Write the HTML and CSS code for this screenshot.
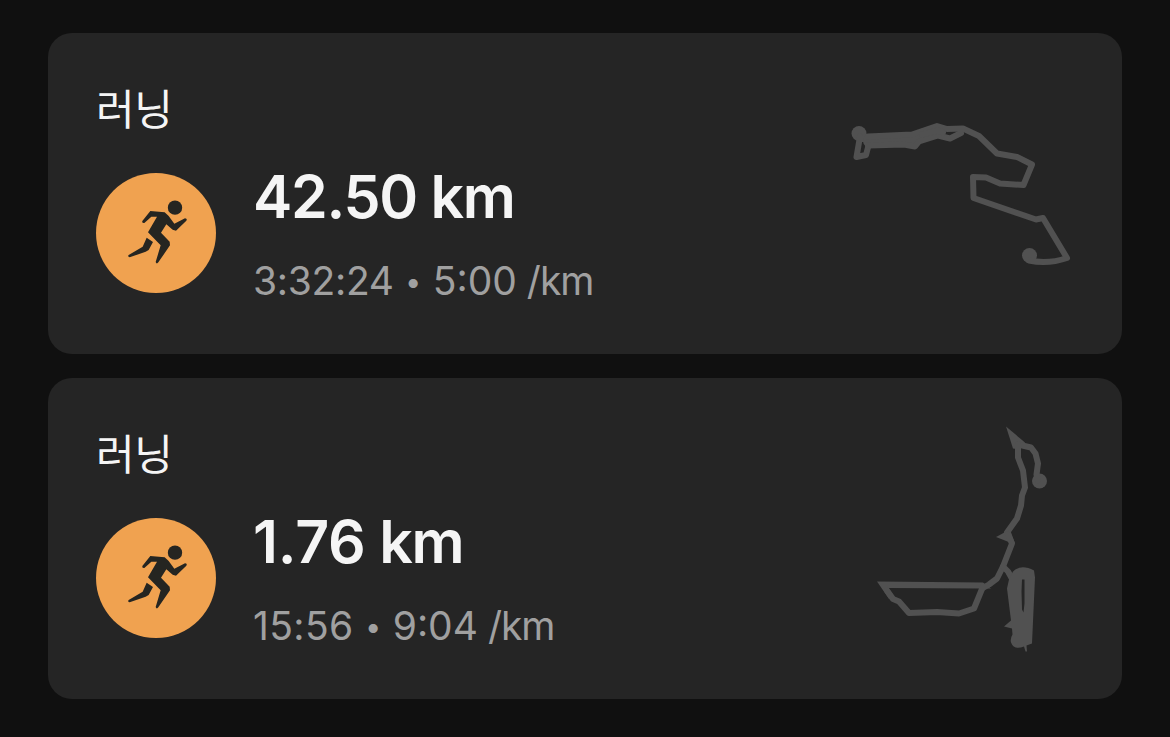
FILE: index.html
```html
<!DOCTYPE html>
<html lang="ko">
<head>
<meta charset="utf-8">
<title>러닝</title>
<link rel="stylesheet" href="styles.css">
</head>
<body>
<svg class="symbols" aria-hidden="true">
  <symbol id="runner" viewBox="0 0 360 360">
    <g transform="translate(72 51)">
      <circle cx="165" cy="53" r="21.5"/>
      <path d="M91 63 L134 67 L146 78 L163 101 L195 85 Q203 86 199 92 L168 122 L158 119 L139 103 L123 128 L149 155 L150 166 L115 217 Q110 224 107 216 L122 166 L84 127 L111 80 L94 80 L73 99 Q65 100 67 93 Z"/>
      <path d="M80 143 L99 156 L86 180 L77 185 L29 202 Q22 200 26 195 L68 170 Z"/>
    </g>
  </symbol>
</svg>
<main class="feed">
  <article class="card">
    <div class="info">
      <h2 class="title">러닝</h2>
      <div class="summary">
        <div class="badge"><svg class="runner"><use href="#runner"/></svg></div>
        <div class="stats">
          <p class="distance">42.50 km</p>
          <p class="detail"><span class="time">3:32:24</span><span class="dot">•</span><span>5:00</span><span class="unit"> /km</span></p>
        </div>
      </div>
    </div>
    <svg class="route" viewBox="840 73.500 240 240">
      <circle class="pin" cx="859" cy="133" r="7.500"/>
      <circle class="pin" cx="1029.500" cy="255" r="7.500"/>
      <path class="track" d="M860 136 L856.500 156.500 L866 154.500 L868.500 145 L868 139 L860 138"/>
      <path class="track wide" d="M869 140.500 L890 139.500 L912 138.500 L925 133.500"/>
      <path class="track" d="M868 145 L904 144 L915 146 L919 141 L938 135 L950 138 L961 132.500"/>
      <path class="track" d="M868 136 L912 134 L937 125.500 L947 128.500 L963 128 L979 135.500 L997 153 L1017 156.500 L1032 164 L1023.500 184.500 L1000 183 L986 177 L973 176.500 L973.500 197.500 L1036 219 L1043 217.500 L1067 257.500 Q1048 264 1029 260"/>
      <path class="track" d="M922 134 L938 130 L943 132"/>
    </svg>
  </article>
  <article class="card">
    <div class="info">
      <h2 class="title">러닝</h2>
      <div class="summary">
        <div class="badge"><svg class="runner"><use href="#runner"/></svg></div>
        <div class="stats">
          <p class="distance"><span class="loose">1.76</span> km</p>
          <p class="detail"><span class="time short">15:56</span><span class="dot">•</span><span>9:04</span><span class="unit"> /km</span></p>
        </div>
      </div>
    </div>
    <svg class="route" viewBox="840 418.500 240 240">
      <path class="pin" d="M1006 426 L1025 442 L1020 449 L1013 448 Z"/>
      <circle class="pin" cx="1039.500" cy="480.500" r="7.500"/>
      <path class="track" d="M1018 444 L1031 447 L1035.500 453 L1038 463 L1036.500 474 L1038 480"/>
      <path class="track" d="M1018 444 L1018 457 L1023 470 L1025 487 L1022 495 L1021 505 L1017 518 L1007 532"/>
      <path class="pin" d="M996 536.500 L1010 529 L1015 543 L1010 542 Z"/>
      <path class="track" d="M1008 534 L1012 543 L1003 566 L997 578 L989 584 L982 588"/>
      <path class="pin" d="M877 581 L983 582 L991 588 L982 588 L888 587.500 L895 597 L889 598.500 Z"/>
      <path class="track" d="M887 590 L893 598.500 L899 601 L909 612.500 L937 611.500 L959 613 L974 608 L983 586"/>
      <path class="track" d="M1003 566 L1008 571 L1013 580"/>
      <path class="pin" fill-rule="evenodd" d="M1013 571 Q1021 563 1034 570 L1035 577 L1032 643 L1026.500 645 L1027 651 L1025.500 651 L1024 646 Q1014 650 1011 642 Q1010 638 1012.500 634 L1012 628 L1004 626 L1011 620 L1007 588 L1009 579 Z M1022 579 L1021.500 591 L1022 609 L1023.500 612 L1024.500 603 L1024.500 579 Z"/>
    </svg>
  </article>
</main>
</body>
</html>
```
FILE: styles.css
```css
* {
  box-sizing: border-box;
}

body {
  margin: 0;
  background: #101010;
  font-family: Inter, "Noto Sans CJK KR", sans-serif;
  font-optical-sizing: none;
  color: #f5f5f5;
}

.symbols {
  display: none;
}

.feed {
  display: flex;
  flex-direction: column;
  gap: 24px;
  padding: 33px 48px 38px;
}

.card {
  display: flex;
  justify-content: space-between;
  align-items: center;
  height: 321px;
  padding: 0 42px 0 48px;
  border-radius: 24px;
  background: #252525;
}

.info {
  align-self: flex-start;
  padding-top: 46px;
}

.title {
  margin: 0 0 38px;
  font-family: "Noto Sans CJK KR", sans-serif;
  font-size: 42px;
  font-weight: 400;
  line-height: 56px;
  letter-spacing: -0.5px;
}

.summary {
  display: flex;
  gap: 37px;
}

.badge {
  width: 120px;
  height: 120px;
  border-radius: 50%;
  background: #f0a250;
}

.runner {
  display: block;
  width: 120px;
  height: 120px;
  fill: #252521;
}

.stats {
  display: flex;
  flex-direction: column;
  gap: 40px;
}

.distance,
.detail {
  margin: 0;
  white-space: nowrap;
}

.distance {
  font-size: 59px;
  font-weight: 600;
  line-height: 48px;
  letter-spacing: -0.022em;
}

.loose {
  letter-spacing: -0.003em;
}

.detail {
  height: 40px;
  font-size: 39px;
  line-height: 40px;
  color: #a0a0a0;
}

.time {
  letter-spacing: -0.3px;
}

.short {
  letter-spacing: 0.4px;
}

.dot {
  display: inline-block;
  width: 39px;
  font-size: 29px;
  line-height: 1;
  text-align: center;
  vertical-align: 3px;
}

.unit {
  letter-spacing: -1px;
}

.route {
  width: 240px;
  height: 240px;
}

.pin {
  fill: #515151;
}

.track {
  fill: none;
  stroke: #515151;
  stroke-width: 6px;
  stroke-linecap: round;
  stroke-linejoin: round;
}

.wide {
  stroke-width: 12px;
}
```
